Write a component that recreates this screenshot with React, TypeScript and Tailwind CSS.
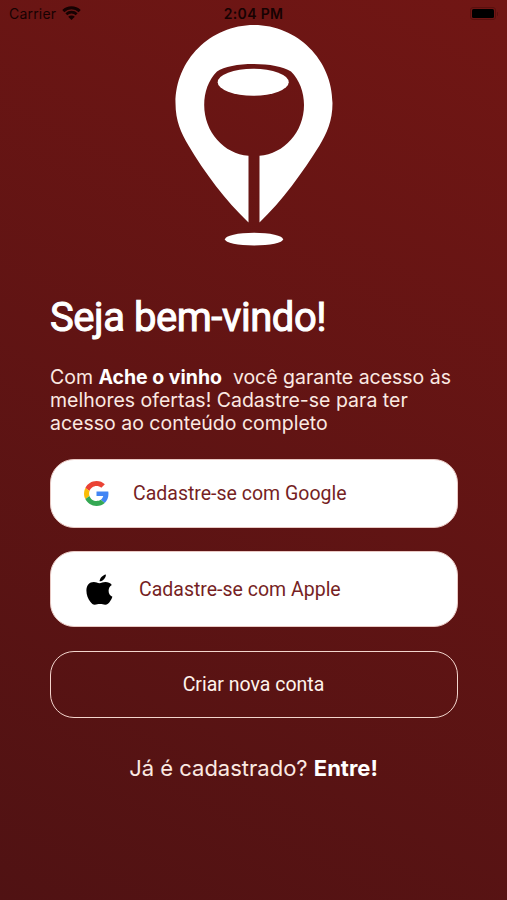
function StatusBar() {
  return (
    <header className="grid h-[26px] grid-cols-3 items-center pt-px pl-[9px] pr-[9px] font-['Inter',sans-serif] text-[14px] text-[#160202]">
      <div className="flex items-center gap-[6px]">
        <span className="tracking-[0.2px]">Carrier</span>
        <svg className="-mt-px" width="19" height="14" viewBox="0 0 19 14" fill="none" stroke="currentColor">
          <path d="M1.3 5.1C5.9.7 13.1.7 17.7 5.1" strokeWidth="2.900" />
          <path d="M4.3 8.3c2.9-2.8 7.5-2.8 10.4 0" strokeWidth="2.700" />
          <path d="M9.5 14 6.200 10.800c1.900-1.700 4.700-1.700 6.600 0Z" fill="currentColor" stroke="none" />
        </svg>
      </div>
      <span className="whitespace-nowrap text-center font-semibold tracking-[0.35px]">2:04 PM</span>
      <div className="flex items-center justify-end">
        <div className="h-[13px] w-[26px] rounded-[3px] border border-[#5a100e] p-px">
          <div className="h-full rounded-[1.5px] bg-black" />
        </div>
        <div className="ml-px h-[4px] w-px rounded-r bg-[#5a100e]" />
      </div>
    </header>
  );
}

function Logo() {
  return (
    <svg className="mx-auto block" width="158" height="221" viewBox="175 25 158 221" fill="#fff">
      <path
        fillRule="evenodd"
        d="M254 25C210.500 25 175.500 60 175.500 103C175.500 121 181 133 188.500 145.500C204 172 226 201 248.500 222.500V155.700C224 154 204.200 132 204.200 105C204.200 92 208.500 80 217 71.500C224 66.500 238 64 253.500 64C269 64 283 66.500 291 71.500C299.500 80 304 92 304 105C304 132 284 154 259.500 155.700V222.500C282 201 303 172 319.500 145.500C327 133 332.500 121 332.500 103C332.500 60 297.500 25 254 25Z"
      />
      <ellipse cx="253.200" cy="82.200" rx="35.500" ry="13.500" />
      <ellipse cx="254" cy="239.200" rx="29" ry="6.400" />
    </svg>
  );
}

function GoogleIcon() {
  return (
    <svg width="25" height="25" viewBox="0 0 48 48">
      <path fill="#EA4335" d="M24 9.500c3.540 0 6.710 1.220 9.210 3.600l6.850-6.850C35.900 2.380 30.470 0 24 0 14.620 0 6.510 5.380 2.560 13.220l7.980 6.190C12.430 13.720 17.740 9.500 24 9.500z" />
      <path fill="#4285F4" d="M46.980 24.550c0-1.570-.15-3.090-.38-4.550H24v9.020h12.940c-.58 2.960-2.260 5.480-4.780 7.180l7.730 6c4.510-4.180 7.090-10.360 7.090-17.650z" />
      <path fill="#FBBC05" d="M10.530 28.590c-.48-1.450-.76-2.990-.76-4.590s.27-3.140.76-4.590l-7.980-6.190C.92 16.460 0 20.120 0 24c0 3.880.92 7.540 2.560 10.780l7.970-6.190z" />
      <path fill="#34A853" d="M24 48c6.480 0 11.930-2.130 15.890-5.810l-7.730-6c-2.150 1.450-4.920 2.300-8.160 2.300-6.260 0-11.570-4.220-13.470-9.910l-7.980 6.190C6.510 42.620 14.620 48 24 48z" />
    </svg>
  );
}

function AppleIcon() {
  return (
    <svg width="27" height="31" viewBox="0 0 27 31" fill="#000">
      <path d="M13.400 9.200C11.500 9 10.200 8 7.800 8C3.400 8 .4 11.300 .4 16.500C.4 20.800 2 25 4.500 28.100C5.700 29.600 6.900 30.800 8.700 30.800C10.700 30.800 11.700 30.100 14 30.100C16.300 30.100 17.200 30.800 19.200 30.800C21.300 30.800 22.800 29.200 24.100 27.200C25.200 25.600 26 24.300 26.400 22.800C24 21.700 22.600 19.500 22.600 16.700C22.600 14 23.900 12.100 25.800 10.900C24.300 8.800 22 8 19.500 8C16.800 8 15.400 9 13.400 9.200Z" />
      <path d="M13.600 7.300C13.500 4.300 16.500 1 19.900.4C20 3.700 17.200 7.100 13.600 7.300Z" />
    </svg>
  );
}

export default function App() {
  return (
    <main className="flex h-[900px] w-[507px] flex-col overflow-hidden bg-[linear-gradient(207deg,#711614_0%,#501213_100%)]">
      <StatusBar />
      <div className="-mt-px">
        <Logo />
      </div>
      <section className="flex flex-col px-[50px] font-['Roboto',sans-serif]">
        <h1 className="mt-[48px] h-[48px] whitespace-nowrap text-[40px] leading-[48px] tracking-[-0.45px] text-white [-webkit-text-stroke:1px_white]">
          Seja bem-vindo!
        </h1>
        <p className="mt-[24px] whitespace-nowrap font-['Inter',sans-serif] text-[19.5px] leading-[23px] text-[#fbe9e2]">
          <span className="block tracking-[-0.02px]">
            Com <b className="text-white">Ache o vinho</b>&nbsp; você garante acesso às
          </span>
          <span className="block">melhores ofertas! Cadastre-se para ter</span>
          <span className="block">acesso ao conteúdo completo</span>
        </p>
        <button className="mt-[24px] flex h-[69px] w-[408px] items-center rounded-[24px] border border-[#e9c9c4] bg-white pl-[33px] text-[19.5px] text-[#761f24]">
          <GoogleIcon />
          <span className="ml-[24px] mt-px whitespace-nowrap">Cadastre-se com Google</span>
        </button>
        <button className="mt-[23px] flex h-[76px] w-[408px] items-center rounded-[24px] border border-[#e9c9c4] bg-white pl-[35px] text-[19.5px] text-[#761f24]">
          <AppleIcon />
          <span className="ml-[26px] mt-px whitespace-nowrap">Cadastre-se com Apple</span>
        </button>
        <button className="mt-[24px] h-[67px] w-[408px] rounded-[24px] border-[1.5px] border-[#f3d5cd] pt-px pr-px text-[19.5px] text-[#fff3ec]">
          Criar nova conta
        </button>
        <p className="mt-[36px] whitespace-nowrap text-center font-['Inter',sans-serif] text-[22px] leading-[28px] text-[#fbe9e2]">
          Já é cadastrado? <b className="text-white">Entre!</b>
        </p>
      </section>
    </main>
  );
}
